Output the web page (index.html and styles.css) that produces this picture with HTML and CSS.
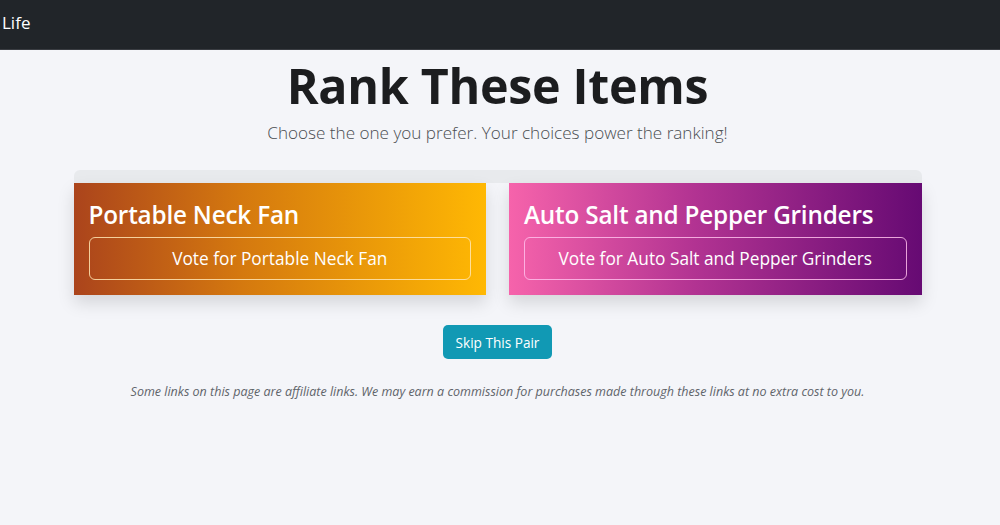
FILE: index.html
```html
<!DOCTYPE html>
<html lang="en">
<head>
<meta charset="utf-8">
<title>Rank These Items</title>
<link rel="stylesheet" href="styles.css">
</head>
<body>
<nav class="navbar"><span class="brand">Life</span></nav>
<main class="main">
  <h1 class="title">Rank These Items</h1>
  <p class="lead">Choose the one you prefer. Your choices power the ranking!</p>
  <div class="arena">
    <div class="progress"></div>
    <div class="pair">
      <div class="card card-amber">
        <h2 class="card-title">Portable Neck Fan</h2>
        <button class="vote">Vote for Portable Neck Fan</button>
      </div>
      <div class="card card-pink">
        <h2 class="card-title">Auto Salt and Pepper Grinders</h2>
        <button class="vote">Vote for Auto Salt and Pepper Grinders</button>
      </div>
    </div>
  </div>
  <div class="skip-row"><button class="skip">Skip This Pair</button></div>
  <p class="note">Some links on this page are affiliate links. We may earn a commission for purchases made through these links at no extra cost to you.</p>
</main>
</body>
</html>
```
FILE: styles.css
```css
* { box-sizing: border-box; }
html, body { margin: 0; padding: 0; }
body {
  background: #f4f5f9;
  font-family: "Open Sans", "Noto Sans", "Liberation Sans", sans-serif;
  color: #212529;
  width: 1000px;
  height: 525px;
  overflow: hidden;
}
.navbar {
  height: 50px;
  background: #212529;
  display: flex;
  align-items: center;
  padding-left: 2px;
  border-bottom: 1px solid #3a3d42;
}
.brand {
  color: #fff;
  font-size: 17px;
  line-height: 1;
  margin-top: -4px;
}
.main {
  width: 995px;
  display: flex;
  flex-direction: column;
  align-items: center;
}
.title {
  margin: 3px 0 0;
  font-size: 48.4px;
  font-weight: 700;
  line-height: 64px;
  letter-spacing: -0.3px;
  color: #1c1d1f;
}
.lead {
  margin: 3px 0 0;
  font-size: 17.1px;
  font-weight: 300;
  color: #4a4d51;
  line-height: 26px;
}
.arena {
  width: 848px;
  margin-top: 24px;
}
.progress {
  height: 13px;
  background: #e8eaed;
  border-radius: 6px 6px 0 0;
}
.pair {
  display: grid;
  grid-template-columns: 1fr 1fr;
  gap: 23px;
}
.card {
  height: 112px;
  padding: 15px 15px 0;
  box-shadow: 0 8px 16px rgba(0, 0, 0, 0.13);
  color: #fff;
}
.card-amber { background: linear-gradient(90deg, #ab441c 0%, #d4780f 40%, #ffb803 100%); }
.card-pink { background: linear-gradient(90deg, #f663ab 0%, #b23392 45%, #660a73 100%); }
.card-pink .vote { border-color: rgba(255, 190, 235, 0.85); }
.card-title {
  margin: 0 0 6px;
  font-size: 24.3px;
  font-weight: 600;
  line-height: 33px;
  letter-spacing: -0.2px;
}
.vote {
  display: block;
  width: 100%;
  height: 43px;
  background: transparent;
  border: 1px solid rgba(255, 230, 180, 0.85);
  border-radius: 6px;
  color: #fff;
  font-family: inherit;
  font-size: 17.3px;
  font-weight: 400;
  cursor: pointer;
}
.skip-row { margin-top: 30px; }
.skip {
  height: 34px;
  padding: 0 13px;
  background: #1199b4;
  border: none;
  border-radius: 5px;
  color: #fff;
  font-family: inherit;
  font-size: 13.6px;
  cursor: pointer;
}
.note {
  margin: 24px 0 0;
  font-size: 12.5px;
  font-style: italic;
  color: #5f646a;
}
```
